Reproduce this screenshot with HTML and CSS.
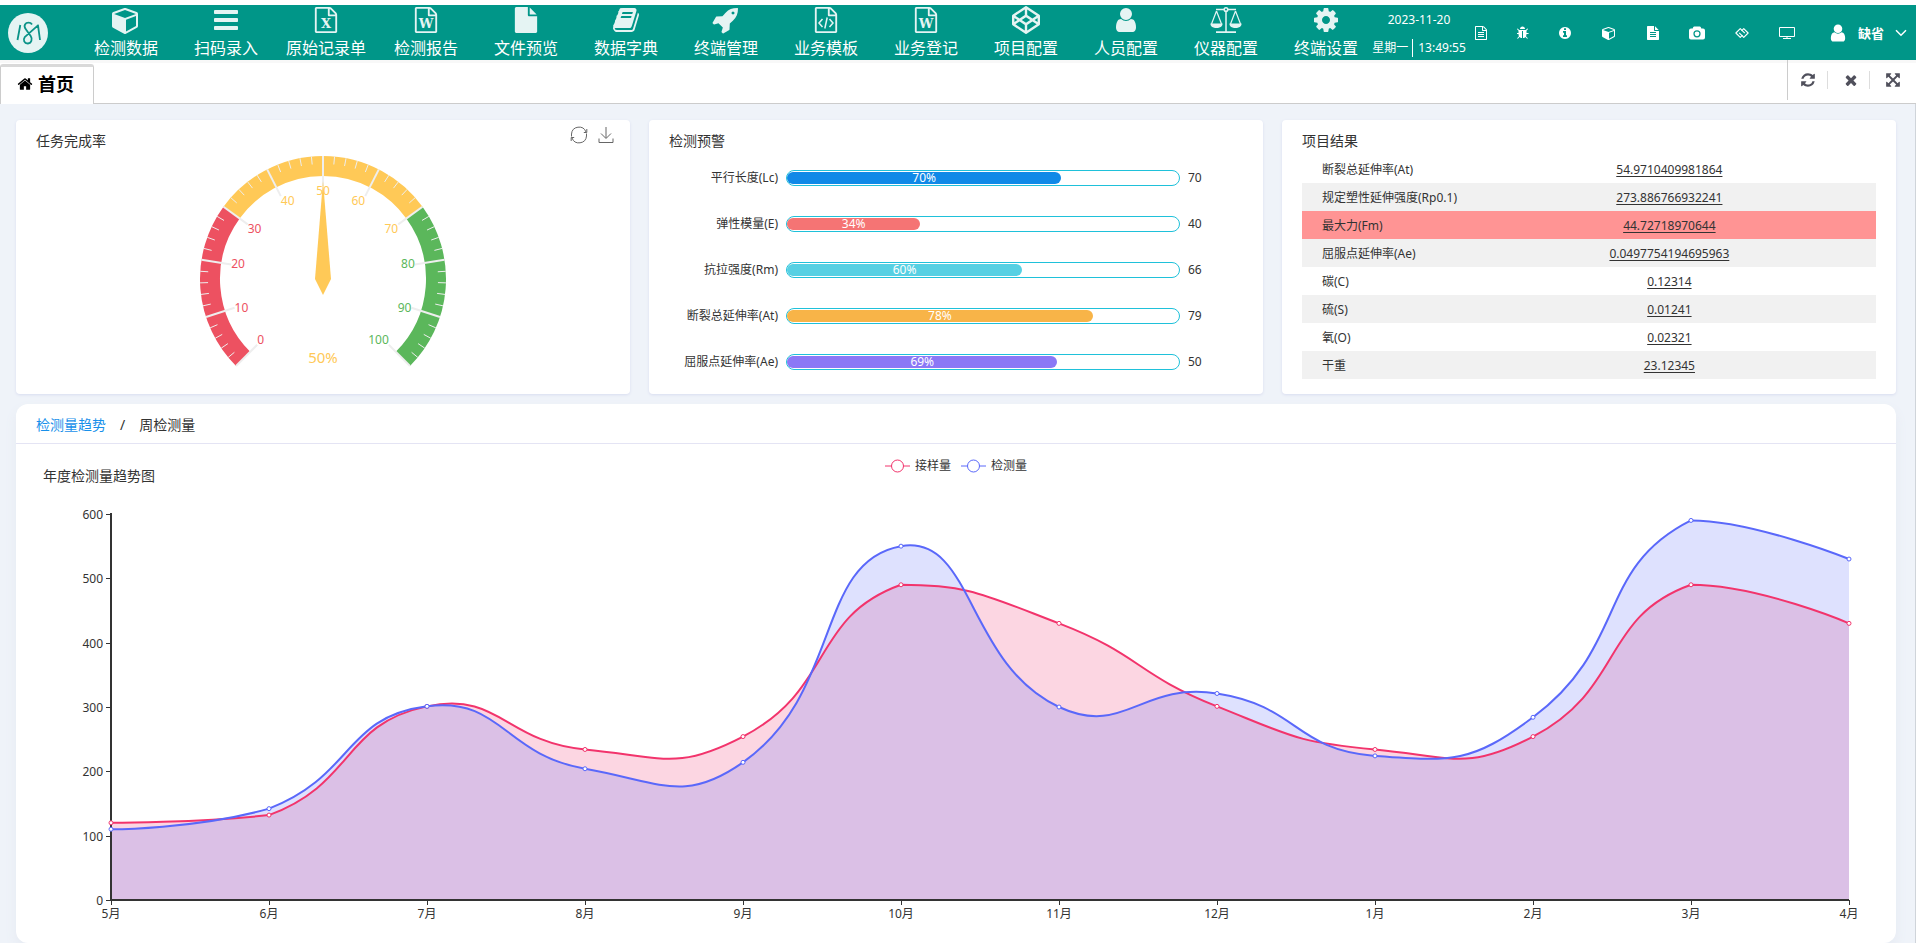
FILE: index.html
```html
<!DOCTYPE html>
<html lang="zh-CN">
<head>
<meta charset="utf-8">
<title>首页</title>
<meta name="viewport" content="width=device-width, initial-scale=1">
<link rel="stylesheet" href="styles.css">
</head>
<body>
<svg class="sprite" aria-hidden="true">
  <symbol id="i-cube" viewBox="0 0 1792 1792"><path d="M896 1629l640-349v-636l-640 233v752zm-64-865l698-254-698-254-698 254zm832-252v768q0 35-18 65t-49 47l-704 384q-28 16-61 16t-61-16l-704-384q-31-17-49-47t-18-65v-768q0-40 23-73t61-50l704-256q22-8 44-8t44 8l704 256q38 17 61 50t23 73z"/></symbol>
  <symbol id="i-bars" viewBox="0 0 1792 1792"><path d="M1664 1344v128q0 26-19 45t-45 19h-1408q-26 0-45-19t-19-45v-128q0-26 19-45t45-19h1408q26 0 45 19t19 45zm0-512v128q0 26-19 45t-45 19h-1408q-26 0-45-19t-19-45v-128q0-26 19-45t45-19h1408q26 0 45 19t19 45zm0-512v128q0 26-19 45t-45 19h-1408q-26 0-45-19t-19-45v-128q0-26 19-45t45-19h1408q26 0 45 19t19 45z"/></symbol>
  <symbol id="i-sheet" viewBox="0 0 1792 1792"><path d="M1596 380q28 28 48 76t20 88v1152q0 40-28 68t-68 28h-1344q-40 0-68-28t-28-68v-1600q0-40 28-68t68-28h896q40 0 88 20t76 48zm-444-244v376h376q-10-29-22-41l-313-313q-12-12-41-22zm384 1528v-1024h-416q-40 0-68-28t-28-68v-416h-768v1536h1280z"/></symbol>
  <symbol id="i-file" viewBox="0 0 1792 1792"><path d="M1152 512v-472q22 14 36 28l408 408q14 14 28 36h-472zm-128 32q0 40 28 68t68 28h544v1056q0 40-28 68t-68 28h-1344q-40 0-68-28t-28-68v-1600q0-40 28-68t68-28h800v544z"/></symbol>
  <symbol id="i-book" viewBox="0 0 1792 1792"><path d="M1703 478q40 57 18 129l-275 906q-19 64-76.500 107.500t-122.500 43.500h-923q-77 0-148.500-53.500t-99.500-131.500q-24-67-2-127 0-4 3-27t4-37q1-8-3-21.500t-3-19.500q2-11 8-21t16.500-23.500 16.500-23.500q23-38 45-91.500t30-91.500q3-10 .5-30t-.5-28q3-11 17-28t17-23q21-36 42-92t25-90q1-9-2.500-32t.5-28q4-13 22-30.500t22-22.500q19-26 42.500-84.500t27.500-96.500q1-8-3-25.500t-2-26.500q2-8 9-18t18-23 17-21q8-12 16.500-30.500t15-35 16-36 19.500-32 26.500-23.500 36-11.500 47.500 5.500l-1 3q38-9 51-9h761q74 0 114 56t18 130l-274 906q-36 119-71.500 153.500t-128.500 34.500h-869q-27 0-38 15-11 16-1 43 24 70 144 70h923q29 0 56-15.500t35-41.500l300-987q7-22 5-57 38 15 59 43zm-1064 2q-4 13 2 22.500t20 9.500h608q13 0 25.500-9.500t16.500-22.500l21-64q4-13-2-22.500t-20-9.500h-608q-13 0-25.500 9.500t-16.500 22.500zm-83 256q-4 13 2 22.500t20 9.500h608q13 0 25.500-9.500t16.500-22.500l21-64q4-13-2-22.500t-20-9.500h-608q-13 0-25.500 9.500t-16.500 22.500z"/></symbol>
  <symbol id="i-rocket" viewBox="0 0 1792 1792"><path d="M1440 448q0-40-28-68t-68-28-68 28-28 68 28 68 68 28 68-28 28-68zm224-288q0 249-75.500 430.500t-253.500 360.500q-81 80-195 176l-20 379q-2 16-16 26l-384 224q-7 4-16 4-12 0-23-9l-64-64q-13-14-8-32l85-276-281-281-276 85q-3 1-9 1-14 0-23-9l-64-64q-17-19-5-39l224-384q10-14 26-16l379-20q96-114 176-195 188-187 358-258t431-71q14 0 24 9.500t10 22.500z"/></symbol>
  <symbol id="i-codepen" viewBox="0 0 1792 1792"><path d="M216 1169l603 402v-359l-334-223zm-62-144l193-129-193-129v258zm819 546l603-402-269-180-334 223v359zm-77-493l272-182-272-182-272 182zm-411-275l334-223v-359l-603 402zm960 93l193 129v-258zm-138-93l269-180-603-402v359zm485-180v546q0 41-34 64l-819 546q-21 13-43 13t-43-13l-819-546q-34-23-34-64v-546q0-41 34-64l819-546q21-13 43-13t43 13l819 546q34 23 34 64z"/></symbol>
  <symbol id="i-user" viewBox="0 0 1792 1792"><path d="M1536 1399q0 109-62.500 187t-150.500 78h-854q-88 0-150.500-78t-62.500-187q0-85 8.500-160.500t31.500-152 58.500-131 94-89 134.500-34.500q131 128 313 128t313-128q76 0 134.500 34.500t94 89 58.500 131 31.500 152 8.500 160.500zm-256-887q0 159-112.500 271.500t-271.500 112.500-271.500-112.500-112.500-271.500 112.500-271.500 271.500-112.500 271.500 112.500 112.500 271.500z"/></symbol>
  <symbol id="i-scale" viewBox="0 0 32 28"><g fill="none" stroke="currentColor" stroke-width="1.500"><path d="M6 3.500h8M18 3.500h8M16 5v21"/><circle cx="16" cy="3.500" r="1.800"/><path d="M6.500 5L1.500 18M6.500 5l5 13M25.500 5l-5 13M25.500 5l5 13" stroke-width="1.200"/></g><path d="M.4 17.500h12.200c0 3-2.600 4.500-6.100 4.500S.4 20.500.4 17.500zM19.400 17.500h12.200c0 3-2.600 4.500-6.100 4.500s-6.100-1.500-6.100-4.500zM6 25.200h20V27H6z"/></symbol>
  <symbol id="i-cog" viewBox="0 0 1792 1792"><path d="M1152 896q0-106-75-181t-181-75-181 75-75 181 75 181 181 75 181-75 75-181zm512-109v222q0 12-8 23t-20 13l-185 28q-19 54-39 91 35 50 107 138 10 12 10 25t-9 23q-27 37-99 108t-94 71q-12 0-26-9l-138-108q-44 23-91 38-16 136-29 186-7 28-36 28h-222q-14 0-24.500-8.500t-11.500-21.500l-28-184q-49-16-90-37l-141 107q-10 9-25 9-14 0-25-11-126-114-165-168-7-10-7-23 0-12 8-23 15-21 51-66.500t54-70.500q-27-50-41-99l-183-27q-13-2-21-12.500t-8-23.500v-222q0-12 8-23t19-13l186-28q14-46 39-92-40-57-107-138-10-12-10-24 0-10 9-23 26-36 98.500-107.500t94.500-71.500q13 0 26 10l138 107q44-23 91-38 16-136 29-186 7-28 36-28h222q14 0 24.500 8.500t11.500 21.500l28 184q49 16 90 37l142-107q9-9 24-9 13 0 25 10 129 119 165 170 7 8 7 22 0 12-8 23-15 21-51 66.500t-54 70.500q26 50 41 98l183 28q13 2 21 12.500t8 23.500z"/></symbol>
  <symbol id="i-home" viewBox="0 0 1792 1792"><path d="M1472 992v480q0 26-19 45t-45 19h-384v-384h-256v384h-384q-26 0-45-19t-19-45v-480q0-1 .5-3t.5-3l575-474 575 474q1 2 1 6zm223-69l-62 74q-8 9-21 11h-3q-13 0-21-7l-692-577-692 577q-12 8-24 7-13-2-21-11l-62-74q-8-10-7-23.500t11-21.500l719-599q32-26 76-26t76 26l244 204v-195q0-14 9-23t23-9h192q14 0 23 9t9 23v408l219 182q10 8 11 21.500t-7 23.500z"/></symbol>
  <symbol id="i-refresh" viewBox="0 0 1792 1792"><path d="M1639 1056q0 5-1 7-64 268-268 434.500t-478 166.500q-146 0-282.500-55t-243.500-157l-129 129q-19 19-45 19t-45-19-19-45v-448q0-26 19-45t45-19h448q26 0 45 19t19 45-19 45l-137 137q71 66 161 102t187 36q134 0 250-65t186-179q11-17 53-117 8-23 30-23h192q13 0 22.500 9.500t9.500 22.500zm25-800v448q0 26-19 45t-45 19h-448q-26 0-45-19t-19-45 19-45l138-138q-148-137-349-137-134 0-250 65t-186 179q-11 17-53 117-8 23-30 23h-199q-13 0-22.500-9.500t-9.500-22.500v-7q65-268 270-434.500t480-166.500q146 0 284 55.500t245 156.500l130-129q19-19 45-19t45 19 19 45z"/></symbol>
  <symbol id="i-times" viewBox="0 0 1792 1792"><path d="M1490 1322q0 40-28 68l-136 136q-28 28-68 28t-68-28l-294-294-294 294q-28 28-68 28t-68-28l-136-136q-28-28-28-68t28-68l294-294-294-294q-28-28-28-68t28-68l136-136q28-28 68-28t68 28l294 294 294-294q28-28 68-28t68 28l136 136q28 28 28 68t-28 68l-294 294 294 294q28 28 28 68z"/></symbol>
  <symbol id="i-expand" viewBox="0 0 1792 1792"><path d="M1411 541l-355 355 355 355 144-144q29-31 70-14 39 17 39 59v448q0 26-19 45t-45 19h-448q-42 0-59-40-17-39 14-69l144-144-355-355-355 355 144 144q31 30 14 69-17 40-59 40h-448q-26 0-45-19t-19-45v-448q0-42 40-59 39-17 69 14l144 144 355-355-355-355-144 144q-19 19-45 19-12 0-24-5-40-17-40-59v-448q0-26 19-45t45-19h448q42 0 59 40 17 39-14 69l-144 144 355 355 355-355-144-144q-31-30-14-69 17-40 59-40h448q26 0 45 19t19 45v448q0 42-39 59-13 5-25 5-26 0-45-19z"/></symbol>
  <symbol id="i-doc-lines" viewBox="128 0 1536 1792"><use href="#i-sheet" width="1792" height="1792"/><path d="M512 768h768v128H512zM512 1024h768v128H512zM512 1280h768v128H512z"/></symbol>
  <symbol id="i-bug" viewBox="128 128 1536 1536"><path d="M1632 960q0 26-19 45t-45 19h-224q0 171-67 290l208 209q19 19 19 45t-19 45q-18 19-45 19t-45-19l-198-197q-5 5-15 13t-42 28.500-65 36.500-82 29-97 13v-896h-128v896q-51 0-101.500-13.500t-87-33-66-39-43.500-32.500l-15-14-183 207q-20 21-48 21-24 0-43-16-19-18-20.500-44.500t15.500-46.500l202-227q-58-114-58-274h-224q-26 0-45-19t-19-45 19-45 45-19h224v-294l-173-173q-19-19-19-45t19-45 45-19 45 19l173 173h844l173-173q19-19 45-19t45 19 19 45-19 45l-173 173v294h224q26 0 45 19t19 45zm-480-576h-640q0-133 93.500-226.500t226.500-93.500 226.500 93.500 93.500 226.500z"/></symbol>
  <symbol id="i-info" viewBox="128 128 1536 1536"><path d="M1152 1376v-160q0-14-9-23t-23-9h-96v-512q0-14-9-23t-23-9h-320q-14 0-23 9t-9 23v160q0 14 9 23t23 9h96v320h-96q-14 0-23 9t-9 23v160q0 14 9 23t23 9h448q14 0 23-9t9-23zm-128-896v-160q0-14-9-23t-23-9h-192q-14 0-23 9t-9 23v160q0 14 9 23t23 9h192q14 0 23-9t9-23zm640 416q0 209-103 385.500t-279.500 279.500-385.500 103-385.500-103-279.500-279.500-103-385.500 103-385.500 279.500-279.500 385.500-103 385.500 103 279.500 279.500 103 385.500z"/></symbol>
  <symbol id="i-file-lines" viewBox="128 0 1536 1792"><path fill-rule="evenodd" d="M1152 512v-472q22 14 36 28l408 408q14 14 28 36zM1024 0v544q0 40 28 68t68 28h544v1056q0 40-28 68t-68 28H224q-40 0-68-28t-28-68V96q0-40 28-68t68-28zM512 768v128h768V768zm0 256v128h768v-128zm0 256v128h768v-128z"/></symbol>
  <symbol id="i-camera" viewBox="0 0 16 14"><path fill-rule="evenodd" d="M5.200.5h5.600q.6 0 .9.600L12.300 2.500H14q2 0 2 2v7q0 2-2 2H2q-2 0-2-2v-7q0-2 2-2h1.700L4.300 1.100q.3-.6.9-.6zM8 4.200a3.600 3.600 0 100 7.200 3.600 3.600 0 000-7.200zm0 1.200a2.400 2.400 0 110 4.800 2.400 2.400 0 010-4.800z"/></symbol>
  <symbol id="i-link" viewBox="0 0 16 12"><g fill="none" stroke="currentColor" stroke-width="1.300" stroke-linejoin="round"><path d="M8.500 8.500L6 11 1 6l5-5 5.200 5.200"/><path d="M7.500 3.500L10 1l5 5-5 5-5.200-5.200"/></g></symbol>
  <symbol id="i-screen" viewBox="0 0 16 14"><path fill="none" stroke="currentColor" d="M.5 1.500h15v9H.5zM8 10.500v2M4 12.500h8"/></symbol>
  <symbol id="i-chevron" viewBox="0 0 12 8"><path fill="none" stroke="currentColor" stroke-width="1.500" d="M1 1.200l5 5 5-5"/></symbol>
</svg>

<header class="topbar">
  <a class="logo" href="#" aria-label="首页标志">
    <svg viewBox="0 0 40 40"><circle cx="20" cy="20" r="20" fill="#e5f4f3"/><path fill="none" stroke="#0a9387" stroke-width="1.800" stroke-linejoin="round" d="M12.300 12L9.500 27M24 11.500C22.500 9 18.500 9 17 11.500c-1 1.800-.2 3.500 1 5l4.700 6.500c2 3 .8 7.200-2.700 7.500-3.800.2-5.200-3.700-3.300-6.300L30 12.300 32 27"/></svg>
  </a>
  <nav class="menu">
    <a href="#"><svg class="icon lg"><use href="#i-cube"/></svg>检测数据</a>
    <a href="#"><svg class="icon lg"><use href="#i-bars"/></svg>扫码录入</a>
    <a href="#"><svg class="icon md" viewBox="0 0 26 26"><use href="#i-sheet"/><text class="badge-letter" x="13" y="21">X</text></svg>原始记录单</a>
    <a href="#"><svg class="icon md" viewBox="0 0 26 26"><use href="#i-sheet"/><text class="badge-letter" x="13" y="21">W</text></svg>检测报告</a>
    <a href="#"><svg class="icon md"><use href="#i-file"/></svg>文件预览</a>
    <a href="#"><svg class="icon lg"><use href="#i-book"/></svg>数据字典</a>
    <a href="#"><svg class="icon lg"><use href="#i-rocket"/></svg>终端管理</a>
    <a href="#"><svg class="icon md" viewBox="0 0 26 26"><use href="#i-sheet"/><path class="code-mark" d="M9.500 12l-3.500 4 3.500 4M16.500 12l3.500 4-3.500 4M14.200 10.500l-2.400 11"/></svg>业务模板</a>
    <a href="#"><svg class="icon md" viewBox="0 0 26 26"><use href="#i-sheet"/><text class="badge-letter" x="13" y="21">W</text></svg>业务登记</a>
    <a href="#"><svg class="icon lg"><use href="#i-codepen"/></svg>项目配置</a>
    <a href="#"><svg class="icon lg"><use href="#i-user"/></svg>人员配置</a>
    <a href="#"><svg class="icon wide"><use href="#i-scale"/></svg>仪器配置</a>
    <a href="#"><svg class="icon lg"><use href="#i-cog"/></svg>终端设置</a>
  </nav>
  <div class="clock">
    <span>2023-11-20</span>
    <div class="clock-row"><span>星期一</span><time>13:49:55</time></div>
  </div>
  <div class="tools">
    <button type="button" aria-label="文档"><svg class="w12"><use href="#i-doc-lines"/></svg></button>
    <button type="button" aria-label="调试"><svg class="w12"><use href="#i-bug"/></svg></button>
    <button type="button" aria-label="信息"><svg class="w12"><use href="#i-info"/></svg></button>
    <button type="button" aria-label="模块"><svg class="w16"><use href="#i-cube"/></svg></button>
    <button type="button" aria-label="文件"><svg class="w12"><use href="#i-file-lines"/></svg></button>
    <button type="button" aria-label="截图"><svg class="w16"><use href="#i-camera"/></svg></button>
    <button type="button" aria-label="链接"><svg class="w14"><use href="#i-link"/></svg></button>
    <button type="button" aria-label="屏幕"><svg class="w16"><use href="#i-screen"/></svg></button>
  </div>
  <button class="account" type="button">
    <svg class="account-user"><use href="#i-user"/></svg>缺省<svg class="account-arrow"><use href="#i-chevron"/></svg>
  </button>
</header>

<div class="tabbar">
  <a class="tab" href="#"><svg class="tab-icon"><use href="#i-home"/></svg>首页</a>
  <div class="tab-tools">
    <button type="button" aria-label="刷新"><svg><use href="#i-refresh"/></svg></button>
    <button type="button" aria-label="关闭"><svg><use href="#i-times"/></svg></button>
    <button type="button" aria-label="全屏"><svg><use href="#i-expand"/></svg></button>
  </div>
</div>

<main class="page">
  <div class="cards">
    <section class="card">
      <h2>任务完成率</h2>
      <div class="card-actions">
        <button type="button" aria-label="还原"><svg viewBox="0 0 18 18"><path d="M1.500 10.500V8A7.500 7.500 0 0 1 16 6M16.500 7.500V10A7.500 7.500 0 0 1 2 12M16.800 3v3.500h-3M1.200 15v-3.500h3"/></svg></button>
        <button type="button" aria-label="下载"><svg viewBox="0 0 18 18"><path d="M9 1v11M4 7.500l5 5 5-5M2 12.500v4h14v-4"/></svg></button>
      </div>
      <svg class="gauge" id="gauge" viewBox="0 0 250 230" role="img" aria-label="任务完成率"></svg>
    </section>

    <section class="card">
      <h2>检测预警</h2>
      <ul class="bars">
        <li><span class="bar-name">平行长度(Lc)</span><span class="track"><span class="fill blue" style="width:70%">70%</span></span><span>70</span></li>
        <li><span class="bar-name">弹性模量(E)</span><span class="track"><span class="fill red" style="width:34%">34%</span></span><span>40</span></li>
        <li><span class="bar-name">抗拉强度(Rm)</span><span class="track"><span class="fill cyan" style="width:60%">60%</span></span><span>66</span></li>
        <li><span class="bar-name">断裂总延伸率(At)</span><span class="track"><span class="fill orange" style="width:78%">78%</span></span><span>79</span></li>
        <li><span class="bar-name">屈服点延伸率(Ae)</span><span class="track"><span class="fill violet" style="width:69%">69%</span></span><span>50</span></li>
      </ul>
    </section>

    <section class="card">
      <h2>项目结果</h2>
      <table class="results">
        <tbody>
          <tr><th scope="row">断裂总延伸率(At)</th><td><a href="#">54.9710409981864</a></td></tr>
          <tr><th scope="row">规定塑性延伸强度(Rp0.1)</th><td><a href="#">273.886766932241</a></td></tr>
          <tr class="alert"><th scope="row">最大力(Fm)</th><td><a href="#">44.72718970644</a></td></tr>
          <tr><th scope="row">屈服点延伸率(Ae)</th><td><a href="#">0.0497754194695963</a></td></tr>
          <tr><th scope="row">碳(C)</th><td><a href="#">0.12314</a></td></tr>
          <tr><th scope="row">硫(S)</th><td><a href="#">0.01241</a></td></tr>
          <tr><th scope="row">氧(O)</th><td><a href="#">0.02321</a></td></tr>
          <tr><th scope="row">干重</th><td><a href="#">23.12345</a></td></tr>
        </tbody>
      </table>
    </section>
  </div>

  <section class="panel">
    <nav class="panel-nav"><a class="active" href="#">检测量趋势</a><span>/</span><a href="#">周检测量</a></nav>
    <div class="chart-head">
      <h3>年度检测量趋势图</h3>
      <div class="legend">
        <button class="pink" type="button"><svg viewBox="0 0 25 14"><path d="M0 7h25"/><circle cx="12.500" cy="7" r="6"/></svg><span>接样量</span></button>
        <button class="indigo" type="button"><svg viewBox="0 0 25 14"><path d="M0 7h25"/><circle cx="12.500" cy="7" r="6"/></svg><span>检测量</span></button>
      </div>
    </div>
    <div class="chart-box"><svg class="chart" id="trend" role="img" aria-label="年度检测量趋势图"></svg></div>
  </section>
</main>
<script src="charts.js"></script>
</body>
</html>
```

FILE: styles.css
```css
* { box-sizing: border-box; }

body {
  margin: 0;
  min-height: 100vh;
  display: flex;
  flex-direction: column;
  background: #fff;
  color: #333;
  font: 12px/20px "Noto Sans", "Noto Sans CJK SC", sans-serif;
}

a { color: inherit; text-decoration: none; }
h2, h3 { margin: 0; font-size: 14px; font-weight: 400; line-height: 20px; }
button { border: 0; padding: 0; background: none; color: inherit; font: inherit; cursor: pointer; }
svg { display: block; fill: currentColor; }
.sprite { position: absolute; width: 0; height: 0; }

/* Top bar */
.topbar {
  display: flex;
  align-items: center;
  height: 55px;
  margin-top: 5px;
  padding-right: 9px;
  background: #009688;
  color: #fff;
}
.logo { flex: none; width: 76px; padding-left: 8px; }
.logo svg { width: 40px; height: 40px; }
.menu { display: flex; }
.menu a {
  display: flex;
  flex-direction: column;
  align-items: center;
  width: 100px;
  font-size: 16px;
  line-height: 22px;
  white-space: nowrap;
}
.icon { height: 28px; margin-bottom: 3px; color: #e5f4f3; }
.icon.lg { width: 28px; }
.icon.md { width: 26px; height: 26px; margin: 1px 0 4px; }
.icon.wide { width: 32px; }
.badge-letter { font: bold 13px "DejaVu Serif", serif; text-anchor: middle; }
.code-mark { fill: none; stroke: currentColor; stroke-width: 1.5px; }

.clock { flex: none; width: 86px; text-align: center; line-height: 18px; }
.clock > span { display: block; margin: 2px 0 10px; }
.clock-row { display: flex; justify-content: center; white-space: nowrap; }
.clock-row time { margin-left: 4px; padding-left: 5px; border-left: 1px solid #fff; }
.tools { display: flex; gap: 30px; margin-left: 13px; }
.tools svg { height: 14px; }
.w12 { width: 12px; }
.w14 { width: 14px; }
.w16 { width: 16px; }
.account { display: flex; align-items: center; margin-left: auto; font-size: 13px; font-weight: 700; white-space: nowrap; }
.account-user { width: 20px; height: 20px; margin-right: 10px; }
.account-arrow { width: 12px; height: 8px; margin-left: 11px; }

/* Page tabs */
.tabbar {
  display: flex;
  justify-content: space-between;
  height: 44px;
  border-top: 3px solid #f8f8f8;
  border-bottom: 1px solid #ccc;
}
.tab {
  display: flex;
  align-items: center;
  gap: 5px;
  height: 40px;
  margin-top: 1px;
  padding: 0 19px 4px 16px;
  border: 1px solid #ccc;
  border-top: 3px solid #d9d9d9;
  border-bottom: 0;
  border-radius: 3px 3px 0 0;
  background: #fff;
  color: #000;
  font-size: 18px;
  font-weight: 700;
}
.tab-icon { width: 16px; height: 16px; }
.tab-tools {
  display: flex;
  align-items: center;
  height: 40px;
  margin-top: -3px;
  border-left: 1px solid #ccc;
  color: #50505c;
}
.tab-tools button { width: 42px; height: 18px; padding-left: 15px; border-left: 1px solid #ddd; }
.tab-tools button:first-child { width: 39px; padding-left: 12px; border-left: 0; }
.tab-tools button:last-child { width: 47px; }
.tab-tools svg { width: 16px; height: 16px; }

/* Content */
.page {
  flex: 1;
  display: flex;
  flex-direction: column;
  gap: 10px;
  padding: 16px 19px 0 16px;
  border-right: 1px solid #cfd4da;
  background: #eff3f9;
}
.cards { display: grid; grid-template-columns: repeat(3, 1fr); gap: 19px; }
.card {
  position: relative;
  padding: 11px 20px 9px;
  border-radius: 4px;
  background: #fff;
  box-shadow: 0 1px 3px #d9ddf0;
}
.card h2 { margin-bottom: 4px; }
.card-actions { position: absolute; top: 6px; right: 15px; display: flex; gap: 9px; }
.card-actions svg { width: 18px; height: 18px; fill: none; stroke: #666; }

.gauge { width: 250px; height: 230px; margin: 0 auto; overflow: visible; font-size: 12px; }
.gauge text { fill: currentColor; }
.gauge .total { font-size: 15px; }
.g-low { color: #ed5161; }
.g-mid { color: #ffc957; }
.g-high { color: #5bb75b; }
.gauge .band { fill: none; stroke: currentColor; stroke-width: 20px; }
.gauge .tick { stroke: #eee; }
.gauge .major { stroke-width: 2px; }

.bars { margin: 0; padding: 0; list-style: none; }
.bars li {
  display: grid;
  grid-template-columns: 109px 1fr 55px;
  gap: 8px;
  align-items: center;
  height: 46px;
}
.bar-name { text-align: right; white-space: nowrap; }
.track { height: 16px; padding: 1px 0; border: 1px solid #1fc1da; border-radius: 8px; }
.fill { display: block; height: 12px; border-radius: 6px; color: #fff; line-height: 12px; text-align: center; }
.blue { background: #1089e7; }
.red { background: #f57474; }
.cyan { background: #56d0e3; }
.orange { background: #f8b448; }
.violet { background: #8b78f6; }

.results { width: 100%; border-collapse: collapse; }
.results tr { height: 28px; }
.results tr:nth-child(even) { background: #f1f1f1; }
.results .alert { background: #ff9494; }
.results th { width: 28%; padding: 2px 0 0 20px; font-weight: 400; text-align: left; white-space: nowrap; }
.results td { padding: 2px 0 0; text-align: center; }
.results a { text-decoration: underline; text-underline-offset: 2px; }

/* Trend panel */
.panel {
  flex: 1;
  display: flex;
  flex-direction: column;
  border-radius: 12px;
  background: #fff;
  box-shadow: 0 6px 12px #e6eaf2;
}
.panel-nav {
  display: flex;
  gap: 14px;
  height: 40px;
  padding: 11px 20px 8px;
  border-bottom: 1px solid #e4e4f4;
  font-size: 14px;
}
.panel-nav .active { color: #1890ea; }
.chart-head { display: grid; grid-template-columns: 1fr auto 1fr; padding: 12px 27px 0; }
.chart-head h3 { margin-top: 10px; }
.legend { display: flex; align-self: start; gap: 10px; }
.legend button { display: flex; align-items: center; gap: 5px; }
.legend svg { width: 25px; height: 14px; stroke: currentColor; fill: #fff; }
.legend span { color: #333; }
.pink { color: #f2346c; }
.indigo { color: #5a68fa; }

.chart-box { flex: 1; min-height: 457px; }
.chart { width: 100%; height: 457px; font-size: 12px; }
.chart text { fill: #333; }
.chart .axis { stroke: #333; stroke-width: 2px; }
.chart .notch { stroke: #333; }
.chart .line { fill: none; stroke: currentColor; stroke-width: 2px; }
.chart .area { fill: currentColor; opacity: .2; }
.chart .dot { fill: #fff; stroke: currentColor; }
```

FILE: charts.js
```js
const NS = "http://www.w3.org/2000/svg";

function add(parent, name, attrs, text) {
  const el = document.createElementNS(NS, name);
  for (const key in attrs) el.setAttribute(key, attrs[key]);
  if (text !== undefined) el.textContent = text;
  parent.appendChild(el);
  return el;
}

/* Gauge: 0..100 over a 270 degree sweep */
function drawGauge(svg, value) {
  const cx = 125, cy = 124, r = 123;
  const at = (v, radius) => {
    const a = (225 - v * 2.7) * Math.PI / 180;
    return [cx + Math.cos(a) * radius, cy - Math.sin(a) * radius];
  };
  const level = v => v <= 30 ? "g-low" : v <= 70 ? "g-mid" : "g-high";
  const tick = (v, length, cls) => {
    const [x1, y1] = at(v, r), [x2, y2] = at(v, r - length);
    add(svg, "line", { x1, y1, x2, y2, class: cls });
  };

  for (const [from, to] of [[0, 30], [30, 70], [70, 100]]) {
    add(svg, "path", {
      class: "band " + level(to),
      d: `M${at(from, r - 10)}A${r - 10} ${r - 10} 0 0 1 ${at(to, r - 10)}`
    });
  }
  for (let v = 0; v <= 100; v += 2) {
    if (v % 10) { tick(v, 8, "tick"); continue; }
    tick(v, 30, "tick major");
    const [x, y] = at(v, r - 30);
    const dx = (x - cx) / (r - 30), dy = (y - cy) / (r - 30);
    add(svg, "text", {
      x,
      y: y + (dy < -0.4 ? 9 : dy > 0.4 ? -1 : 4),
      class: level(v),
      "text-anchor": dx < -0.4 ? "start" : dx > 0.4 ? "end" : "middle"
    }, v);
  }
  add(svg, "text", { x: cx, y: 208, class: "total g-mid", "text-anchor": "middle" }, value + "%");
  add(svg, "path", {
    class: "g-mid",
    d: `M${cx} ${cy - 98}L${cx + 8} ${cy}L${cx} ${cy + 16}L${cx - 8} ${cy}Z`,
    transform: `rotate(${(value - 50) * 2.7} ${cx} ${cy})`
  });
}

const months = ["5月", "6月", "7月", "8月", "9月", "10月", "11月", "12月", "1月", "2月", "3月", "4月"];
const series = [
  { cls: "pink", data: [120, 132, 301, 234, 254, 490, 430, 301, 234, 254, 490, 430] },
  { cls: "indigo", data: [110, 142, 301, 204, 214, 550, 300, 321, 224, 284, 590, 530] }
];

/* Smoothed line; control points stay inside the bounds of the series */
function smoothPath(pts) {
  const k = 0.5;
  const ys = pts.map(p => p[1]);
  const top = Math.min(...ys), bottom = Math.max(...ys);
  const clamp = p => [p[0], Math.min(bottom, Math.max(top, p[1]))];
  let d = `M${pts[0]}`, c0 = pts[0];
  for (let i = 1; i < pts.length; i++) {
    const p = pts[i], prev = pts[i - 1], next = pts[i + 1];
    let c1 = p, after = p;
    if (next) {
      const v = [next[0] - prev[0], next[1] - prev[1]];
      const a = Math.hypot(p[0] - prev[0], p[1] - prev[1]);
      const b = Math.hypot(next[0] - p[0], next[1] - p[1]);
      const ratio = b / (a + b);
      c1 = clamp([p[0] - v[0] * k * (1 - ratio), p[1] - v[1] * k * (1 - ratio)]);
      after = clamp([p[0] + v[0] * k * ratio, p[1] + v[1] * k * ratio]);
    }
    d += `C${c0} ${c1} ${p}`;
    c0 = after;
  }
  return d;
}

function drawTrend(svg) {
  svg.replaceChildren();
  const left = 95, right = svg.clientWidth - 47, top = 28, bottom = 414;
  const x = i => left + (right - left) * i / (months.length - 1);
  const y = v => bottom - (bottom - top) * v / 600;
  const lines = series.map(s => ({ cls: s.cls, pts: s.data.map((v, i) => [x(i), y(v)]) }));

  for (const l of lines) {
    const d = smoothPath(l.pts);
    add(svg, "path", { class: "area " + l.cls, d: `${d}V${bottom}H${left}Z` });
  }
  add(svg, "line", { class: "axis", x1: left - 1, y1: bottom, x2: right, y2: bottom });
  add(svg, "line", { class: "axis", x1: left, y1: top - 1, x2: left, y2: bottom });
  for (let v = 0; v <= 600; v += 100) {
    const ty = Math.round(y(v)) + 0.5;
    add(svg, "line", { class: "notch", x1: left - 5, y1: ty, x2: left, y2: ty });
    add(svg, "text", { x: left - 8, y: ty + 4, "text-anchor": "end" }, v);
  }
  months.forEach((name, i) => {
    const tx = Math.round(x(i)) + 0.5;
    add(svg, "line", { class: "notch", x1: tx, y1: bottom, x2: tx, y2: bottom + 5 });
    add(svg, "text", { x: x(i), y: bottom + 18, "text-anchor": "middle" }, name);
  });
  for (const l of lines) {
    add(svg, "path", { class: "line " + l.cls, d: smoothPath(l.pts) });
    for (const [cx, cy] of l.pts) add(svg, "circle", { class: "dot " + l.cls, cx, cy, r: 2 });
  }
}

const trend = document.getElementById("trend");
drawGauge(document.getElementById("gauge"), 50);
drawTrend(trend);
window.addEventListener("resize", () => drawTrend(trend));
```
